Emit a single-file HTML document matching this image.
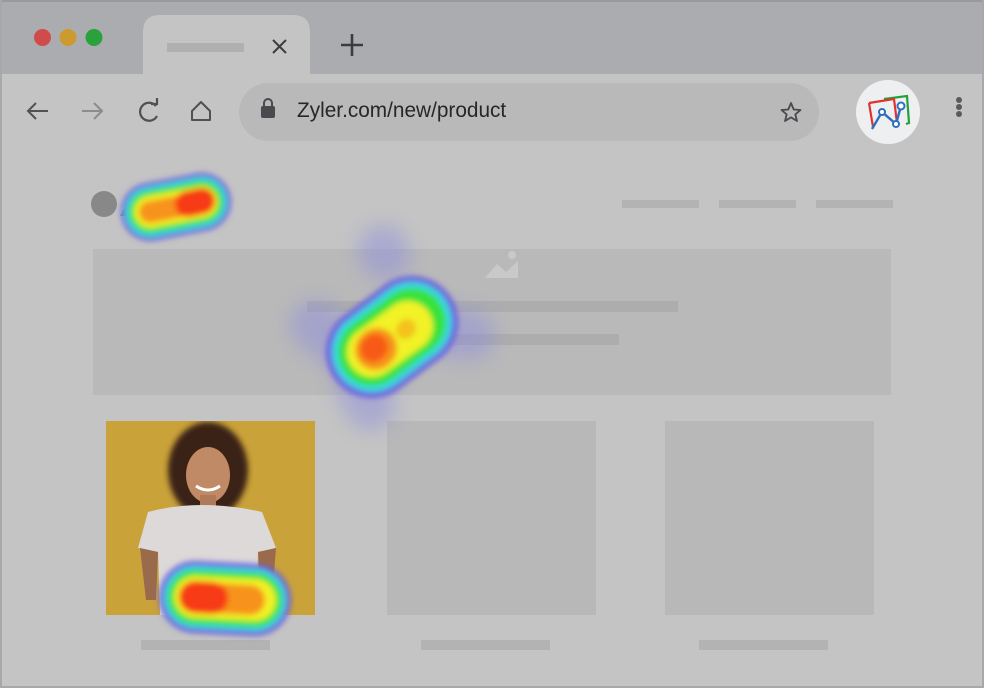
<!DOCTYPE html>
<html><head><meta charset="utf-8"><style>
body{margin:0;width:984px;height:688px;overflow:hidden;font-family:"Liberation Sans",sans-serif;}
</style></head><body>
<svg width="984" height="688" viewBox="0 0 984 688" xmlns="http://www.w3.org/2000/svg">
<defs>
<filter id="b3" x="-50%" y="-50%" width="200%" height="200%"><feGaussianBlur stdDeviation="3"/></filter>
<filter id="b10" x="-50%" y="-50%" width="200%" height="200%"><feGaussianBlur stdDeviation="10"/></filter>
<clipPath id="ph"><rect x="106" y="421" width="209" height="194"/></clipPath>
</defs>
<rect width="984" height="688" fill="#c4c4c4"/>
<rect x="0" y="0" width="984" height="74" fill="#abacb0"/>
<rect x="0" y="0" width="984" height="2" fill="#9a9a9c"/>
<rect x="0" y="0" width="2" height="688" fill="#a8a8a8"/>
<rect x="982" y="0" width="2" height="688" fill="#a8a8a8"/>
<rect x="0" y="686" width="984" height="2" fill="#a8a8a8"/>
<circle cx="42.5" cy="37.5" r="8.5" fill="#d14b4b"/>
<circle cx="68" cy="37.5" r="8.5" fill="#cc9a2e"/>
<circle cx="94" cy="37.5" r="8.5" fill="#2aa23b"/>
<path d="M143 74 V32 Q143 15 160 15 H293 Q310 15 310 32 V74 Z" fill="#c4c4c4"/>
<rect x="167" y="43" width="77" height="9" fill="#b0b0b0"/>
<path d="M273 40 L286 53 M286 40 L273 53" stroke="#3c3c3e" stroke-width="2"/>
<path d="M352 34 V56 M341 45 H363" stroke="#3c3c3e" stroke-width="2.6"/>
<path d="M28 111 H48 M36 103 L28 111 L36 119" stroke="#505055" stroke-width="2" fill="none"/>
<path d="M82 111 H102 M94 103 L102 111 L94 119" stroke="#8c8c8e" stroke-width="2" fill="none"/>
<path d="M156 106 A9 9 0 1 0 157 116" stroke="#505055" stroke-width="2.2" fill="none"/>
<path d="M151 104 L157 104 L157 98" stroke="#505055" stroke-width="2.2" fill="none"/>
<path d="M192 111 L201 102 L210 111 V120 H192 Z" stroke="#505055" stroke-width="2" fill="none" stroke-linejoin="round"/>
<rect x="239" y="83" width="580" height="58" rx="29" fill="#b9b9ba"/>
<rect x="261" y="106" width="14" height="12" rx="2" fill="#4a4a4e"/>
<path d="M264 106 V103 A4 4 0 0 1 272 103 V106" stroke="#4a4a4e" stroke-width="2" fill="none"/>
<text x="297" y="117" font-size="20.8" fill="#26272a">Zyler.com/new/product</text>
<path d="M791 103 L793.7 109.5 L800.5 110 L795.3 114.4 L797 121 L791 117.4 L785 121 L786.7 114.4 L781.5 110 L788.3 109.5 Z" stroke="#4a4a4e" stroke-width="1.8" fill="none" stroke-linejoin="round"/>
<circle cx="888" cy="112" r="32" fill="#eeeff1"/>
<path d="M884 99 L907 96 L909 123 L906 124" stroke="#23a03c" stroke-width="2.2" fill="none"/>
<path d="M869 103 L894 99 L897 123" stroke="#e0322e" stroke-width="2.2" fill="none"/>
<path d="M869 103 L873 127" stroke="#e0322e" stroke-width="2.2" fill="none"/>
<path d="M872 129 L882 112 L896 124 L901 106" stroke="#2d6fc0" stroke-width="2.4" fill="none"/>
<circle cx="882" cy="112" r="3" fill="#fff" stroke="#2d6fc0" stroke-width="2"/>
<circle cx="896" cy="124" r="3" fill="#fff" stroke="#2d6fc0" stroke-width="2"/>
<circle cx="901" cy="106" r="3.5" fill="#fff" stroke="#2d6fc0" stroke-width="2"/>
<circle cx="959" cy="100" r="3" fill="#5a5a5e"/><circle cx="959" cy="107" r="3" fill="#5a5a5e"/><circle cx="959" cy="114" r="3" fill="#5a5a5e"/>
<!-- page -->
<circle cx="104" cy="204" r="13" fill="#888"/>
<path d="M120 216 L133 193 L146 216 Z" fill="#888"/>
<rect x="622" y="200" width="77" height="8" fill="#b3b3b3"/>
<rect x="719" y="200" width="77" height="8" fill="#b3b3b3"/>
<rect x="816" y="200" width="77" height="8" fill="#b3b3b3"/>
<rect x="93" y="249" width="798" height="146" fill="#b9b9b9"/>
<path d="M485 278 L497 264 L506 272 L518 261 V278 Z" fill="#c9c9c9"/><circle cx="512" cy="255" r="4" fill="#c9c9c9"/>
<rect x="307" y="301" width="371" height="11" fill="#adadad"/>
<rect x="445" y="334" width="174" height="11" fill="#adadad"/>
<rect x="387" y="421" width="209" height="194" fill="#b8b8b8"/>
<rect x="665" y="421" width="209" height="194" fill="#b8b8b8"/>
<rect x="141" y="640" width="129" height="10" fill="#b3b3b3"/>
<rect x="421" y="640" width="129" height="10" fill="#b3b3b3"/>
<rect x="699" y="640" width="129" height="10" fill="#b3b3b3"/>
<!-- photo -->
<g clip-path="url(#ph)">
<rect x="106" y="421" width="209" height="194" fill="#caa23a"/>
<ellipse cx="208" cy="470" rx="40" ry="48" fill="#3a2418" filter="url(#b3)"/>
<ellipse cx="208" cy="475" rx="22" ry="28" fill="#c08a66"/>
<rect x="200" y="495" width="16" height="20" fill="#b07a58"/>
<path d="M148 512 Q200 498 262 512 L276 548 L258 552 L256 615 H160 L158 552 L138 548 Z" fill="#ddd9d8"/>
<path d="M140 548 L158 552 L156 600 L146 600 Z" fill="#9a6a4c"/>
<path d="M276 548 L258 552 L262 600 L272 598 Z" fill="#9a6a4c"/>
<path d="M196 486 Q208 494 220 486" stroke="#fff" stroke-width="3" fill="none"/>
</g>
<!-- heatmaps -->
<g opacity="0.45">
<path d="M315 325 L345 350 M385 255 L383 250 M445 330 L470 335 M360 385 L370 405" stroke="#8a88e0" stroke-width="50" stroke-linecap="round" fill="none" filter="url(#b10)"/>
</g>
<g filter="url(#b3)" fill="none" stroke-linecap="round">
<g>
<path d="M150 212 L202 202" stroke="#6a5fe0" stroke-width="58"/>
<path d="M150 212 L202 202" stroke="#35d8e0" stroke-width="50"/>
<path d="M150 212 L202 202" stroke="#39e23b" stroke-width="42"/>
<path d="M150 212 L202 202" stroke="#f2f226" stroke-width="32"/>
<path d="M150 212 L202 202" stroke="#f7931c" stroke-width="22"/>
<path d="M188 204 L202 201" stroke="#f73a12" stroke-width="26"/>
</g>
<g>
<path d="M372 352 L412 322" stroke="#6a5fe0" stroke-width="92"/>
<path d="M372 352 L412 322" stroke="#35d8e0" stroke-width="80"/>
<path d="M372 352 L412 322" stroke="#39e23b" stroke-width="68"/>
<path d="M372 352 L408 326" stroke="#f2f226" stroke-width="50"/>
<path d="M375 350 L377 348" stroke="#f7931c" stroke-width="40"/>
<path d="M405 330 L407 328" stroke="#f3c21e" stroke-width="18"/>
<path d="M373 349 L375 347" stroke="#f75a14" stroke-width="26"/>
</g>
<g>
<path d="M195 597 L255 600" stroke="#6a5fe0" stroke-width="72"/>
<path d="M195 597 L255 600" stroke="#35d8e0" stroke-width="62"/>
<path d="M195 597 L255 600" stroke="#39e23b" stroke-width="54"/>
<path d="M195 597 L255 600" stroke="#f2f226" stroke-width="42"/>
<path d="M195 597 L250 600" stroke="#f7931c" stroke-width="30"/>
<path d="M195 597 L212 598" stroke="#f73a12" stroke-width="32"/>
</g>
</g>
</svg>
</body></html>
